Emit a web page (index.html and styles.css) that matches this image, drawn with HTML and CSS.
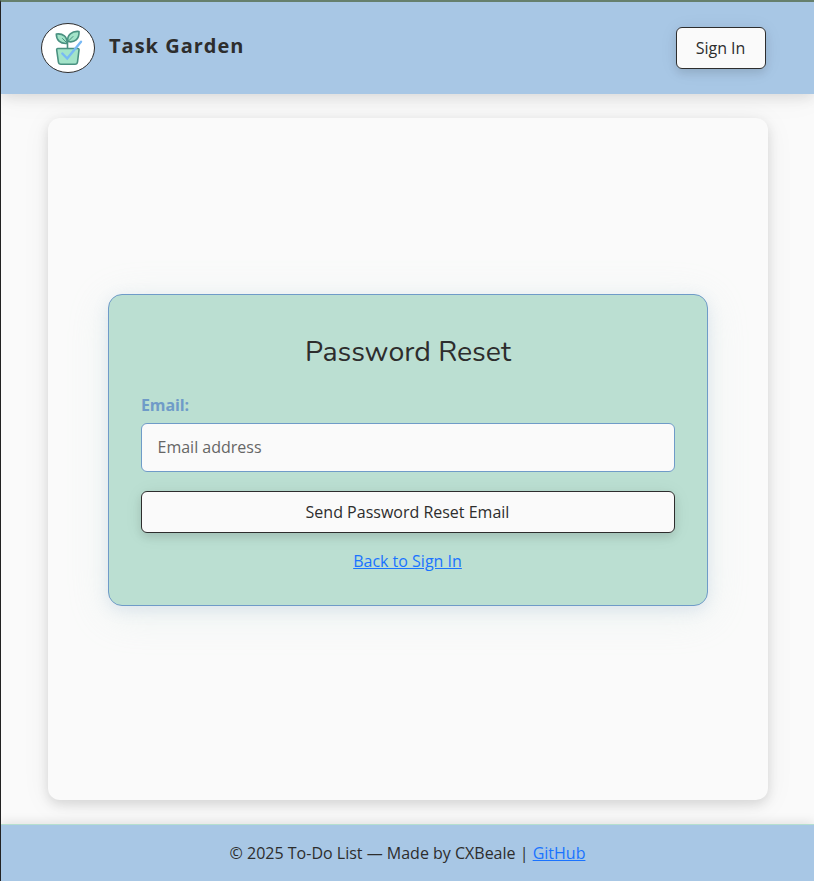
FILE: index.html
```html
<!DOCTYPE html>
<html lang="en">
<head>
<meta charset="utf-8">
<title>Task Garden</title>
<link rel="stylesheet" href="styles.css">
</head>
<body>
<header class="header">
  <div class="brand">
    <svg class="logo" viewBox="0 0 54 50" aria-hidden="true">
      <ellipse cx="27" cy="25" rx="26.5" ry="24.5" fill="#fff" stroke="#2d2d2d"/>
      <g fill="#a3e4c9" stroke="#4a9181" stroke-width="1.6" stroke-linejoin="round" stroke-linecap="round">
        <path d="M26.500 25.500V18"/>
        <path d="M26 20.500C19 21 15.300 17 15.300 11C22 10 26.500 14 26 20.500Z"/>
        <path d="M27 18.500C25.500 12 31 7.800 38 8.500C38.500 16 33.500 20 27 18.500Z"/>
        <path d="M16.800 25.500H36.800Q38.200 25.500 38 27L36.500 39Q36.200 41.300 34 41.300H20Q17.700 41.300 17.400 39L15.700 27Q15.500 25.500 16.800 25.500Z"/>
        <path d="M26.500 20.500L21.500 15.500M27 18.500L32 13.500" stroke-width="1"/>
      </g>
      <path d="M21.300 30.500L26.200 35.500L40 18.700" fill="none" stroke="#78b9f5" stroke-width="2.400" stroke-linecap="round"/>
    </svg>
    <span class="name">Task Garden</span>
  </div>
  <button class="btn">Sign In</button>
</header>
<main class="main">
  <form class="form">
    <h1 class="title">Password Reset</h1>
    <label class="label" for="email">Email:</label>
    <input class="input" id="email" type="email" placeholder="Email address">
    <button class="btn" type="button">Send Password Reset Email</button>
    <a class="link back" href="#">Back to Sign In</a>
  </form>
</main>
<footer class="footer">© 2025 To-Do List — Made by CXBeale | <a class="link" href="#">GitHub</a></footer>
</body>
</html>
```
FILE: styles.css
```css
* { box-sizing: border-box; }
body {
  margin: 0;
  height: 881px;
  display: flex;
  flex-direction: column;
  border-left: 1px solid #222;
  border-top: 2px solid #66806d;
  background: #fafafa;
  color: #2d2d2d;
  font: 16px/24px "Open Sans", sans-serif;
  overflow: hidden;
}
.header {
  flex: none;
  height: 92px;
  padding: 0 48px 0 40px;
  display: flex;
  align-items: center;
  justify-content: space-between;
  background: #a8c7e5;
  box-shadow: 0 4px 12px rgba(0, 0, 0, .1), 0 6px 30px rgba(0, 0, 0, .04);
}
.brand { display: flex; align-items: center; gap: 14px; }
.logo { width: 54px; height: 50px; }
.name { font-size: 20px; font-weight: 700; letter-spacing: 1px; padding-bottom: 4px; }
.btn {
  height: 42px;
  padding: 0 20px 0 19px;
  border: 1px solid #2d2d2d;
  border-radius: 6px;
  background: #fafafa;
  color: #2d2d2d;
  font: inherit;
  box-shadow: 0 4px 8px rgba(0, 0, 0, .1), 0 2px 20px rgba(0, 0, 0, .06);
}
.header .btn { width: 90px; padding: 0 1px 0 0; }
.main {
  flex: 1;
  margin: 24px 46px 24px 47px;
  display: flex;
  align-items: center;
  justify-content: center;
  padding-bottom: 18px;
  border-radius: 12px;
  background: #fafafa;
  box-shadow: 0 4px 12px rgba(0, 0, 0, .12), 0 4px 30px rgba(0, 0, 0, .06);
}
.form {
  width: 600px;
  height: 312px;
  padding: 38px 32px 0;
  display: flex;
  flex-direction: column;
  border: 1px solid #6f9bc8;
  border-radius: 14px;
  background: #bbdfd2;
  box-shadow: 0 4px 16px rgba(111, 140, 200, .16), 0 8px 40px rgba(187, 223, 210, .24);
}
.title {
  margin: 0 0 22px;
  font: 400 28.5px/38px Nunito, Lato, sans-serif;
  text-align: center;
}
.label { margin-bottom: 6px; color: #6f9bc8; font-weight: 700; letter-spacing: -.1px; }
.input {
  height: 49px;
  margin-bottom: 19px;
  padding: 0 15.5px 2px;
  border: 1px solid #6f9bc8;
  border-radius: 6px;
  background: #fafafa;
  font: inherit;
}
.input::placeholder { color: #666; opacity: 1; }
.link { color: #1a73ff; text-decoration: underline; }
.back { margin-top: 16px; padding-right: 1px; text-align: center; }
.footer {
  flex: none;
  height: 57px;
  padding-top: 16px;
  border-top: 1px solid #b5dfcf;
  background: #a8c7e5;
  text-align: center;
  box-shadow: 0 -2px 10px rgba(0, 0, 0, .1);
}
```
